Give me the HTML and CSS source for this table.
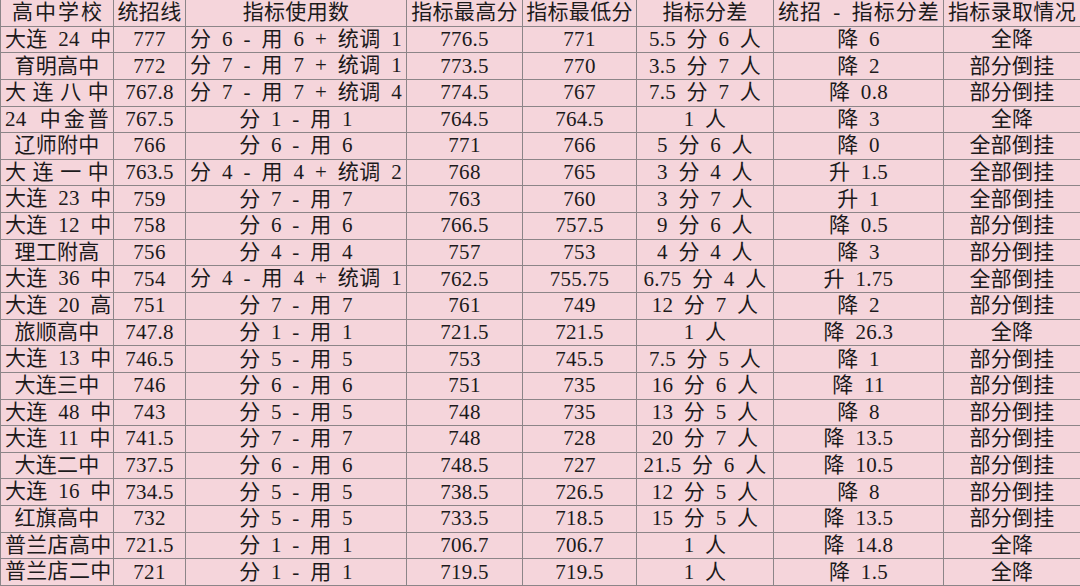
FILE: index.html
```html
<!DOCTYPE html>
<html lang="zh-CN">
<head>
<meta charset="utf-8">
<title>大连高中指标录取情况</title>
<link rel="stylesheet" href="styles.css">
</head>
<body>
<div class="sheet">
  <div class="c ls">高中学校</div><div class="c">统招线</div><div class="c">指标使用数</div><div class="c">指标最高分</div><div class="c">指标最低分</div><div class="c">指标分差</div><div class="c j">统招 - 指标分差</div><div class="c j">指标录取情况</div>

  <div class="c j">大连 24 中</div><div class="c">777</div><div class="c j">分 6 - 用 6 + 统调 1</div><div class="c">776.5</div><div class="c">771</div><div class="c">5.5 分 6 人</div><div class="c">降 6</div><div class="c">全降</div>
  <div class="c">育明高中</div><div class="c">772</div><div class="c j">分 7 - 用 7 + 统调 1</div><div class="c">773.5</div><div class="c">770</div><div class="c">3.5 分 7 人</div><div class="c">降 2</div><div class="c">部分倒挂</div>
  <div class="c j">大连八中</div><div class="c">767.8</div><div class="c j">分 7 - 用 7 + 统调 4</div><div class="c">774.5</div><div class="c">767</div><div class="c">7.5 分 7 人</div><div class="c">降 0.8</div><div class="c">部分倒挂</div>
  <div class="c j">24 中金普</div><div class="c">767.5</div><div class="c">分 1 - 用 1</div><div class="c">764.5</div><div class="c">764.5</div><div class="c">1 人</div><div class="c">降 3</div><div class="c">全降</div>
  <div class="c">辽师附中</div><div class="c">766</div><div class="c">分 6 - 用 6</div><div class="c">771</div><div class="c">766</div><div class="c">5 分 6 人</div><div class="c">降 0</div><div class="c">全部倒挂</div>
  <div class="c j">大连一中</div><div class="c">763.5</div><div class="c j">分 4 - 用 4 + 统调 2</div><div class="c">768</div><div class="c">765</div><div class="c">3 分 4 人</div><div class="c">升 1.5</div><div class="c">全部倒挂</div>
  <div class="c j">大连 23 中</div><div class="c">759</div><div class="c">分 7 - 用 7</div><div class="c">763</div><div class="c">760</div><div class="c">3 分 7 人</div><div class="c">升 1</div><div class="c">全部倒挂</div>
  <div class="c j">大连 12 中</div><div class="c">758</div><div class="c">分 6 - 用 6</div><div class="c">766.5</div><div class="c">757.5</div><div class="c">9 分 6 人</div><div class="c">降 0.5</div><div class="c">部分倒挂</div>
  <div class="c">理工附高</div><div class="c">756</div><div class="c">分 4 - 用 4</div><div class="c">757</div><div class="c">753</div><div class="c">4 分 4 人</div><div class="c">降 3</div><div class="c">部分倒挂</div>
  <div class="c j">大连 36 中</div><div class="c">754</div><div class="c j">分 4 - 用 4 + 统调 1</div><div class="c">762.5</div><div class="c">755.75</div><div class="c">6.75 分 4 人</div><div class="c">升 1.75</div><div class="c">全部倒挂</div>
  <div class="c j">大连 20 高</div><div class="c">751</div><div class="c">分 7 - 用 7</div><div class="c">761</div><div class="c">749</div><div class="c">12 分 7 人</div><div class="c">降 2</div><div class="c">部分倒挂</div>
  <div class="c">旅顺高中</div><div class="c">747.8</div><div class="c">分 1 - 用 1</div><div class="c">721.5</div><div class="c">721.5</div><div class="c">1 人</div><div class="c">降 26.3</div><div class="c">全降</div>
  <div class="c j">大连 13 中</div><div class="c">746.5</div><div class="c">分 5 - 用 5</div><div class="c">753</div><div class="c">745.5</div><div class="c">7.5 分 5 人</div><div class="c">降 1</div><div class="c">部分倒挂</div>
  <div class="c">大连三中</div><div class="c">746</div><div class="c">分 6 - 用 6</div><div class="c">751</div><div class="c">735</div><div class="c">16 分 6 人</div><div class="c">降 11</div><div class="c">部分倒挂</div>
  <div class="c j">大连 48 中</div><div class="c">743</div><div class="c">分 5 - 用 5</div><div class="c">748</div><div class="c">735</div><div class="c">13 分 5 人</div><div class="c">降 8</div><div class="c">部分倒挂</div>
  <div class="c j">大连 11 中</div><div class="c">741.5</div><div class="c">分 7 - 用 7</div><div class="c">748</div><div class="c">728</div><div class="c">20 分 7 人</div><div class="c">降 13.5</div><div class="c">部分倒挂</div>
  <div class="c">大连二中</div><div class="c">737.5</div><div class="c">分 6 - 用 6</div><div class="c">748.5</div><div class="c">727</div><div class="c">21.5 分 6 人</div><div class="c">降 10.5</div><div class="c">部分倒挂</div>
  <div class="c j">大连 16 中</div><div class="c">734.5</div><div class="c">分 5 - 用 5</div><div class="c">738.5</div><div class="c">726.5</div><div class="c">12 分 5 人</div><div class="c">降 8</div><div class="c">部分倒挂</div>
  <div class="c">红旗高中</div><div class="c">732</div><div class="c">分 5 - 用 5</div><div class="c">733.5</div><div class="c">718.5</div><div class="c">15 分 5 人</div><div class="c">降 13.5</div><div class="c">部分倒挂</div>
  <div class="c j">普兰店高中</div><div class="c">721.5</div><div class="c">分 1 - 用 1</div><div class="c">706.7</div><div class="c">706.7</div><div class="c">1 人</div><div class="c">降 14.8</div><div class="c">全降</div>
  <div class="c j">普兰店二中</div><div class="c">721</div><div class="c">分 1 - 用 1</div><div class="c">719.5</div><div class="c">719.5</div><div class="c">1 人</div><div class="c">降 1.5</div><div class="c">全降</div>
</div>
</body>
</html>
```
FILE: styles.css
```css
html, body {
  margin: 0;
  padding: 0;
  background: #f5d5db;
}

.sheet {
  width: 1080px;
  height: 586px;
  display: grid;
  grid-template-columns: 113px 72px 221px 116px 114px 137px 170px 137px;
  grid-template-rows: repeat(22, 1fr);
  background: #f5d5db;
  border-left: 1px solid #8c8588;
  box-sizing: border-box;
  font-family: "Liberation Serif", "Noto Sans CJK SC", serif;
  font-size: 21px;
  color: #1c1a1b;
}

.c {
  box-sizing: border-box;
  border-right: 1px solid #8c8588;
  border-bottom: 1px solid #8c8588;
  display: flex;
  align-items: center;
  justify-content: center;
  white-space: nowrap;
  word-spacing: 5px;
  letter-spacing: 0.3px;
  line-height: 1;
  padding: 0 3px;
  overflow: hidden;
}

.c.ls {
  letter-spacing: 2px;
  padding-left: 5px;
}

.c.j {
  display: block;
  text-align: justify;
  text-align-last: justify;
  line-height: 25px;
  padding: 0 4px;
}
```
